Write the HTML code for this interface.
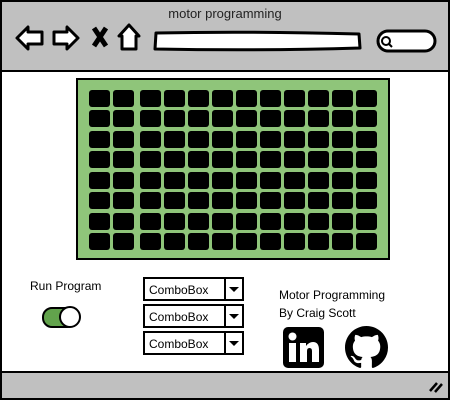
<!DOCTYPE html>
<html><head><style>
body{margin:0;width:450px;height:400px;overflow:hidden;background:#fff;font-family:"Liberation Sans",sans-serif;}
.abs{position:absolute}
.t{font-family:"Comic Sans MS","Liberation Sans",sans-serif;font-size:12px;color:#000}
.cell{position:absolute;width:21px;height:17px;background:#000;border-radius:3px}
.cb{position:absolute;left:143px;width:101px;height:24px;border:2px solid #000;background:#fff;box-sizing:border-box}
.cb span{position:absolute;left:4px;top:4px;font-size:12px}
.cb i{position:absolute;right:0;top:0;width:16px;height:100%;border-left:2px solid #000}
.cb i:after{content:"";position:absolute;left:3px;top:8px;border:5px solid transparent;border-top:5px solid #000}
</style></head><body>
<div class="abs" style="left:0;top:0;width:446px;height:396px;border:2px solid #000;background:#fff"></div>
<div class="abs" style="left:2px;top:2px;width:446px;height:68px;background:#c0c0c0;border-bottom:2px solid #000"></div>
<div class="abs t" style="left:0;width:450px;top:6px;text-align:center;font-size:13px;color:#222">motor programming</div>
<svg class="abs" style="left:0;top:0" width="450" height="70">
<g fill="#fff" stroke="#000" stroke-width="3" stroke-linejoin="round">
<path d="M17 38 L28 27 L28 32 L42 32 L42 44 L28 44 L28 49 Z"/>
<path d="M78 38 L67 27 L67 32 L54 32 L54 44 L67 44 L67 49 Z"/>
<path d="M129 25 L119 36 L122 36 L122 49 L136 49 L136 36 L139 36 Z"/>
<path d="M156 33 Q250 31 359 34 L360 48 Q260 51 155 49 Z"/>
<rect x="378" y="31" width="57" height="20" rx="10"/>
</g>
<path d="M94 28 L106 46 M106 28 L94 46" stroke="#000" stroke-width="5"/>
<circle cx="386" cy="41" r="4" fill="none" stroke="#000" stroke-width="2"/>
<path d="M389 44 L392 47" stroke="#000" stroke-width="2"/>
</svg>
<div class="abs" style="left:76px;top:78px;width:310px;height:178px;background:#8fc57a;border:2px solid #000"></div>
<div id="g"></div>
<div class="abs t" style="left:30px;top:279px">Run Program</div>
<div class="abs" style="left:42px;top:307px;width:35px;height:21px;border-radius:10px;background:#62a34c;border:2px solid #000;box-sizing:border-box"></div>
<div class="abs" style="left:59px;top:306px;width:22px;height:22px;border-radius:50%;background:#fff;border:2px solid #000;box-sizing:border-box"></div>
<div class="cb" style="top:277px"><span>ComboBox</span><i></i></div>
<div class="cb" style="top:304px"><span>ComboBox</span><i></i></div>
<div class="cb" style="top:331px"><span>ComboBox</span><i></i></div>
<div class="abs t" style="left:279px;top:288px">Motor Programming</div>
<div class="abs t" style="left:279px;top:306px">By Craig Scott</div>
<svg class="abs" style="left:283px;top:327px" width="41" height="41" viewBox="0 0 41 41">
<rect x="0" y="0" width="41" height="41" rx="5" fill="#000"/>
<rect x="6" y="16" width="7" height="19" fill="#fff"/><circle cx="9.5" cy="9.5" r="4" fill="#fff"/>
<path d="M17 16 H23 V19 Q26 15 30 15 Q36 15 36 23 V35 H29 V24 Q29 21 26.5 21 Q24 21 24 24 V35 H17 Z" fill="#fff"/>
</svg>
<svg class="abs" style="left:345px;top:326px" width="43" height="43" viewBox="0 0 16 16">
<path fill="#000" d="M8 0C3.580 0 0 3.58 0 8c0 3.54 2.29 6.530 5.47 7.590.4.07.55-.17.55-.38 0-.19-.01-.82-.01-1.49-2.01.37-2.53-.49-2.690-.94-.09-.23-.48-.94-.82-1.13-.28-.15-.68-.52-.01-.53.63-.01 1.08.58 1.23.82.72 1.21 1.87.87 2.33.66.07-.52.28-.87.51-1.07-1.78-.2-3.64-.89-3.64-3.95 0-.87.31-1.59.82-2.15-.08-.2-.36-1.02.08-2.12 0 0 .67-.21 2.2.82.64-.18 1.32-.27 2-.27.68 0 1.36.09 2 .27 1.53-1.04 2.2-.82 2.2-.82.44 1.1.16 1.92.08 2.12.51.56.82 1.27.82 2.15 0 3.07-1.87 3.75-3.65 3.95.29.25.54.73.54 1.48 0 1.07-.01 1.930-.01 2.2 0 .21.15.46.55.38A8.013 8.013 0 0016 8c0-4.42-3.58-8-8-8z"/>
</svg>
<div class="abs" style="left:2px;top:371px;width:446px;height:25px;background:#c0c0c0;border-top:2px solid #000"></div>
<svg class="abs" style="left:428px;top:378px" width="16" height="16"><path d="M2 13 L9 5 M7 14 L14 6" stroke="#000" stroke-width="2.5"/></svg>
<script>
var g=document.getElementById('g'),h='';
var xs=[89,113];for(var i=0;i<10;i++)xs.push(140+24*i);
var ys=[90,110,131,151,172,192,213,233];
ys.forEach(function(y){xs.forEach(function(x){h+='<div class="cell" style="left:'+x+'px;top:'+y+'px"></div>';});});
g.innerHTML=h;
</script>
</body></html>
